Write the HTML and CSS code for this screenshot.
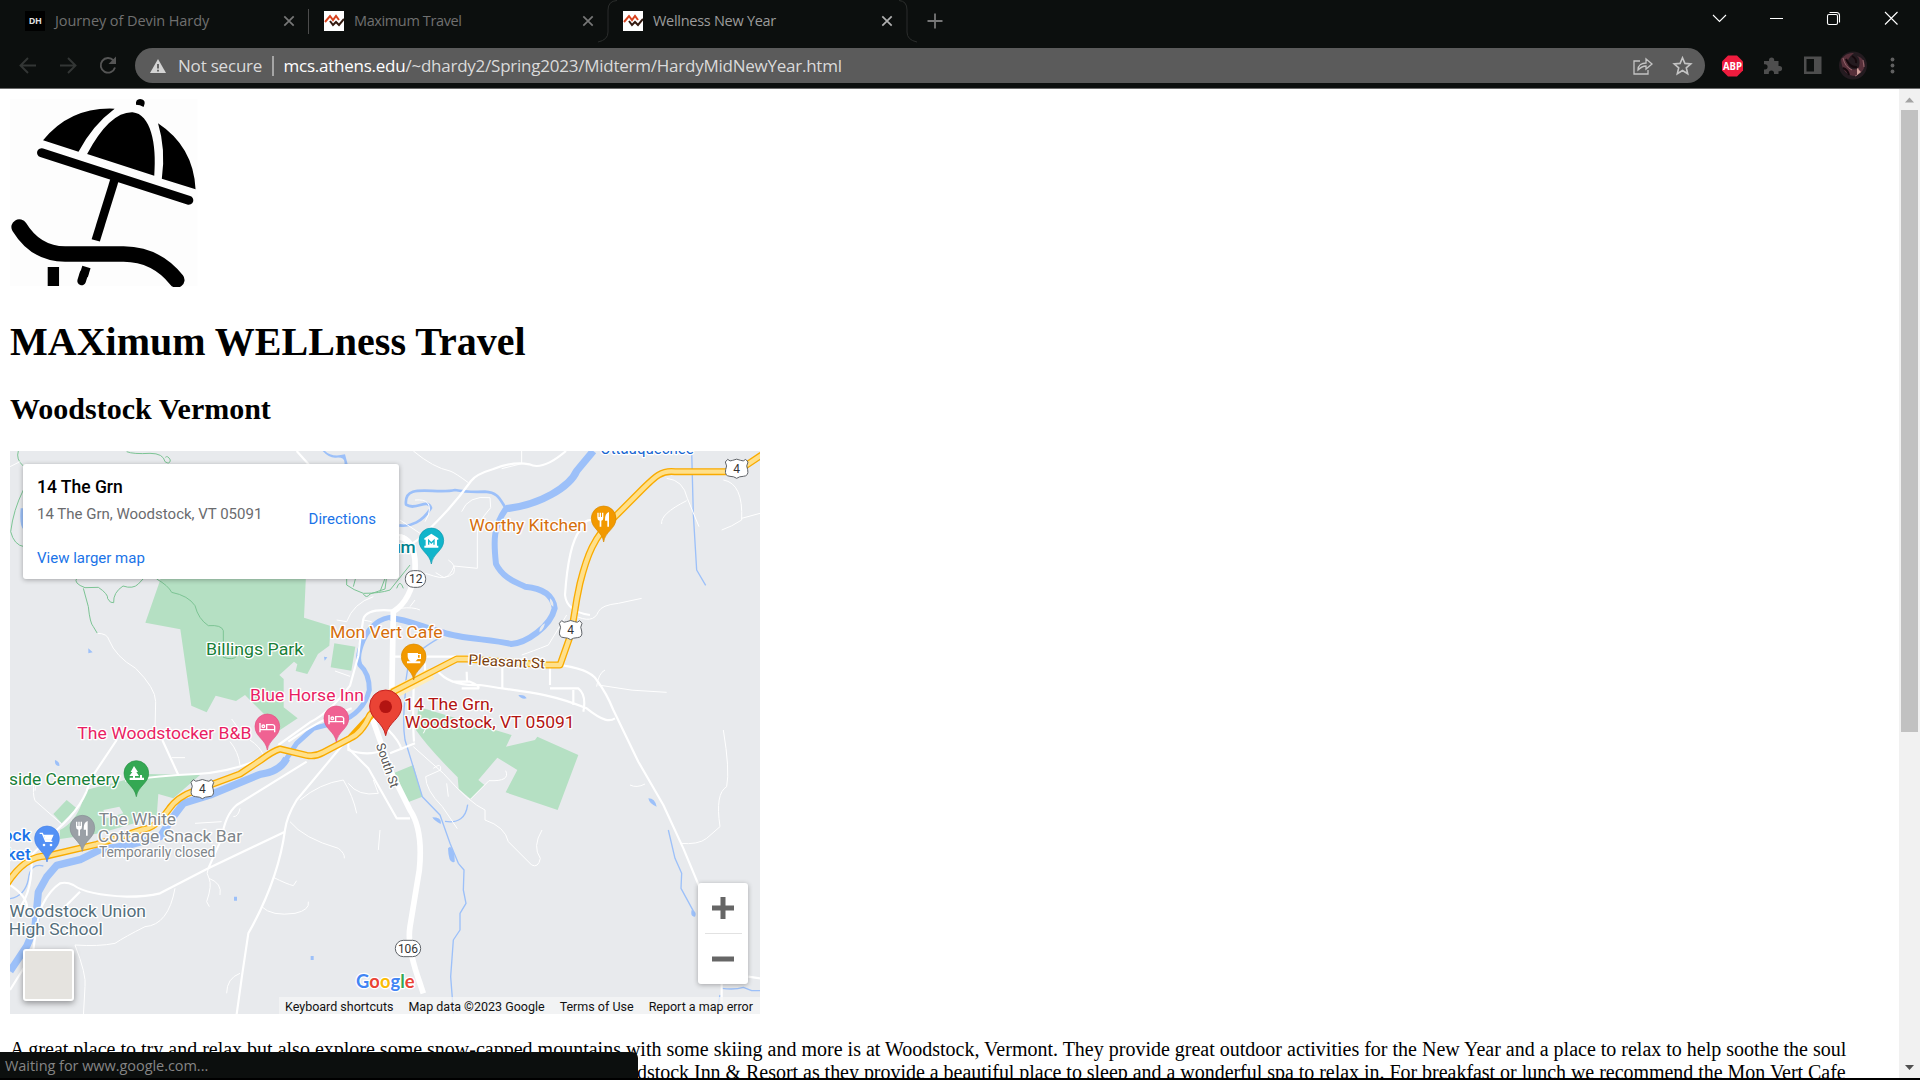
FILE: index.html
```html
<!DOCTYPE html>
<html lang="en">
<head>
<meta charset="utf-8">
<title>Wellness New Year</title>
<link rel="stylesheet" href="styles.css">
</head>
<body>
<header class="chrome">
  <div class="tabstrip">
    <div class="tab"><span class="favicon dh">DH</span><span class="tab-title t1">Journey of Devin Hardy</span><svg class="x" viewBox="0 0 12 12"><path d="M1.3 1.3l9.4 9.4m0-9.4l-9.4 9.4"/></svg><i class="sep"></i></div>
    <div class="tab"><svg class="favicon" viewBox="0 0 20 20"><path fill="#fff" d="M0 0h20v20H0z"/><path d="M1 11l5-6 3 4 3-4 3 4" fill="none" stroke="#d8431f" stroke-width="2"/><path d="M6 10l3 4 3-3 3 3 5-6" fill="none" stroke="#33190f" stroke-width="2"/></svg><span class="tab-title t2">Maximum Travel</span><svg class="x" viewBox="0 0 12 12"><path d="M1.3 1.3l9.4 9.4m0-9.4l-9.4 9.4"/></svg><i class="sep off"></i></div>
    <div class="tab active"><svg class="outline" viewBox="0 0 320 43"><path d="M0 42Q10 40 10 32V10Q10 1 19 .5M301 .5Q309 1 309 10V32Q309 40 319 42"/></svg><svg class="favicon" viewBox="0 0 20 20"><path fill="#fff" d="M0 0h20v20H0z"/><path d="M1 11l5-6 3 4 3-4 3 4" fill="none" stroke="#d8431f" stroke-width="2"/><path d="M6 10l3 4 3-3 3 3 5-6" fill="none" stroke="#33190f" stroke-width="2"/></svg><span class="tab-title t3">Wellness New Year</span><svg class="x" viewBox="0 0 12 12"><path d="M1.3 1.3l9.4 9.4m0-9.4l-9.4 9.4"/></svg><i class="sep off"></i></div>
    <svg class="newtab" viewBox="0 0 16 16"><path d="M8 .5v15M.5 8h15"/></svg>
    <svg class="winbtns" viewBox="0 0 200 36"><path d="M13 15l6.500 6.500 6.500-6.500M70 18.500h13M185 12l12.500 12.500m0-12.500L185 24.500"/><rect x="127.500" y="14.500" width="10" height="10" rx="1.500"/><path d="M129.500 12.500h7q3 0 3 3v7"/></svg>
  </div>
  <div class="toolbar">
    <svg class="nav" viewBox="0 0 110 35"><path stroke="#333635" d="M26 17.500H10.500m7.500-7.500l-7.500 7.500 7.500 7.500M50 17.500h15.500m-7.500-7.500l7.500 7.500-7.500 7.500"/><path stroke="#555" d="M103.500 12.500A7.300 7.300 0 1 0 105 19.500"/><path fill="#555" d="M106 8.500v7.500h-7.500z"/></svg>
    <div class="omnibox">
      <svg class="warn" viewBox="0 0 16 14"><path fill="#d4d4d4" d="M8 0l8 14H0z"/><path stroke="#5b5b5b" stroke-width="1.800" d="M8 5v4.500m0 1.300v1.700"/></svg>
      <span class="ns">Not secure</span><i class="usep"></i><span class="url"><b>mcs.athens.edu</b>/~dhardy2/Spring2023/Midterm/HardyMidNewYear.html</span>
      <svg class="obicons" viewBox="0 0 60 20"><path d="M7 5H1v13h14v-4"/><path d="M5 14c0-5 4-7 8-7V3l6 5-6 5v-3c-3 0-5 1-8 4z"/><path stroke-width="1.600" d="M49.500 1.800l2.400 5.600 5.900.5-4.500 3.900 1.400 5.900-5.200-3.200-5.200 3.200 1.400-5.900-4.500-3.900 5.900-.5z"/></svg>
    </div>
    <svg class="ext" viewBox="0 0 190 35"><path fill="#ef1c3e" d="M13 7.500h9l6 6v9l-6 6h-9l-6-6v-9z"/><text x="17.500" y="21.800" textLength="19" lengthAdjust="spacingAndGlyphs">ABP</text><path fill="#4e4e4e" d="M49 13h5v-1a2.600 2.600 0 0 1 5.200 0v1h4.300v5h1a2.600 2.600 0 0 1 0 5.200h-1V26h-4.500v-1a2.600 2.600 0 0 0-5.200 0v1H49v-4.600h1a2.600 2.600 0 0 0 0-5.200h-1z"/><path fill="#4e4e4e" fill-rule="evenodd" d="M89 8.500h17.500V26H89zM91.500 11v12.500h7.500V11z"/><circle cx="138" cy="17.500" r="14" fill="#241b20"/><path fill="#57303a" d="M126 11q6-7 13-6-8 6-6 12 5 8 11 2 2-8-2-11 7 2 8 9-2 8-9 11-14 0-15-17z"/><path stroke="#94666c" fill="none" d="M128 10q2 9 9 12M143 20q2 7-3 8M148 12l1 7"/><path fill="#d2a39c" d="M142 20l4 4-4 3z"/><path fill="none" stroke="#15090d" stroke-width="2" d="M131 11q4 9 11 8M134 27q-1-5-6-7M137 8q5 3 4 7"/><g fill="#606060"><circle cx="177.500" cy="11.500" r="1.900"/><circle cx="177.500" cy="17.500" r="1.900"/><circle cx="177.500" cy="23.500" r="1.900"/></g></svg>
  </div>
</header>
<div class="viewport">
  <main>
    <svg class="logo" viewBox="30 27 549 564" preserveAspectRatio="none"><path fill="#fdfdfd" d="M30 27h545v560H30z"/><path d="M396 44Q394 28 408 27q15 2 13 14l-3 10q-10-7-22-7zM126 151Q205 50 334 56 270 105 229 185zM254 192Q320 65 386 67C438 72 457 160 449 257zM460 100Q563 170 569 298L471 266Q483 178 460 100z"/><g fill="none" stroke="#000"><path stroke-width="27" stroke-linecap="round" d="M122 188L549 331"/><path stroke-width="25" d="M335 265L279 451"/><path stroke-width="46" stroke-linecap="round" d="M57 411Q105 492 190 492H360Q455 493 514 570"/><path stroke-width="33" d="M156 531v57"/><path stroke-width="25" d="M252 531l-8 27"/><path stroke-width="25" stroke-linecap="round" d="M245 550l-7 23"/></g></svg>
    <h1>MAXimum WELLness Travel</h1>
    <h2>Woodstock Vermont</h2>
    <section class="map">
      <svg class="mapart" viewBox="30 33 2250 1689">
        <defs>
          <path id="pin" d="M0 71C-5 38-37 32-37 0A37 37 0 1 1 37 0C37 32 5 38 0 71z"/>
          <g id="us4"><path class="shield" d="M-27-28Q-20-20-12-25 0-32 12-25 20-20 27-28L34-20Q27-8 33 3 37 22 20 23 8 23 0 29-8 23-20 23-37 22-33 3-27-8-34-20z"/><text y="13" class="num">4</text></g>
          <g id="fork"><path fill="#fff" d="M-19-18h4v13h3v-13h4v13h3v-13h4V-3Q-1 5-7 6v18h-5V6Q-19 5-19-3zM16-20v44h-5V6H4Q3-17 16-20z"/></g>
          <g id="bed" fill="none" stroke="#fff" stroke-width="4"><path d="M-22-13v28M-22 7h44M22 15V-3Q20-8 15-8H-2V6"/><circle cx="-12" cy="-3" r="4"/></g>
        </defs>
        <path fill="#e8eaed" d="M0 0h2300v1760H0z"/>
        <g fill="#b5e0c3">
          <path d="M484 410L436 548l105 20 33 229 46 20 27-50 61 16 27-18 105 105 53-35-42-33v-85l-13-12 44-40 10 8-5 20 35 9 32-60 34-25 4-59-80-25 6-128zM1003 610l63 10-12 72-62-10z"/>
          <path d="M375 1020L258 1050l-11 35q-20 60-67 85v27l120-17 170-50 5-68 45 13 80-70-160-3zM200 1080l30 25-45 45-25-28z"/>
          <path d="M1255 800l280 85-17 35 87-20 7-10 123 55-62 165-156-53 35-67-60-37-57 67 18 15-41 42-36-30-3-35q-90-90-125-142zM1180 1000l60-25 27 95-47 18z"/>
        </g>
        <path fill="#e8eaed" d="M310 1110l48-10 12 20-50 15z"/>
        <g class="trail">
          <path d="M55 33q-8 25 15 45M70 150q-30 60-38 125 10 40 40 45M380 35q20 8 70 5 40 0 45 25 15 10 16-5-8-15-15-8M230 415q-10 15 25 28l40-1q30 20 28 34 8 15 18 12-2-30 28-50 30 10 46-6l15-16M250 445l15 55q5 50 15 60l12 20M470 417q35 20 45 40 50 10 70 40 10 40 40 60 40-3 45 15v80q30 10 40-4"/>
          <path d="M1040 410v25q20 15 50 25 50 0 80-10l60-75M1060 440l8-30M1090 462q10 15 20 0l45-15 5-37M1140 455l15-40M1190 445q10-30 20 0"/>
        </g>
        <g class="water">
          <path class="w20" d="M1780 33l-50 60C1710 140 1620 195 1518 206"/>
          <path class="w12" d="M1520 208c-20-25-20-50-65-53q-55 2-90-5c-60 15-155-25-147 44 30 20 65-22 75 10-25 40-60 58-95 52"/>
          <path class="w16" d="M1518 206C1480 260 1480 300 1488 372 1510 415 1545 425 1575 440c60 5 85 30 89 65-13 55-85 104-130 107-60-15-150-15-205-35-50-10-100-38-159-43"/>
          <path class="w14" d="M1180 531Q1120 535 1090 600 1068 650 1080 675 1108 700 1108 750 1090 820 1020 845L940 865 890 910 860 955Q848 988 780 1003"/>
          <path class="w24" d="M860 955q-20 40-80 48l-150 62-80 25-30 40-40 60-100 27-80 12-60 30-70 17-30 35-25 45-10 105-25 58-50 75"/>
          <path fill="#e8eaed" stroke="none" d="M1650 475q12 10 10 25-12-5-10-25zM1635 550q-5 22-17 26 0-18 17-26z"/>
          <path class="w4" d="M1320 593q-80 45-95 80-10 50-10 100-8 80 0 127l52 170 53 55 30 85 25 60 17 20-2 60 8 40-18 30v50l-20 30-8 110 10 130M2075 33l5 190 10 167 27 46M2005 1170l20 85 20 45-2 45 38 70M1335 1144q60 10 68-50M2165 1645q40 5 65-3l25 10h25M2160 1665l-10 50M130 1278q-40-10-45 40-10 50-55 58"/>
          <path fill="#9cc0f9" stroke="none" d="M1350 1220q15 10 14 45-18 10-20-40zM1297 1132q30 0 25 20-20-10-25-20zM1945 1075q20 0 25 25-22-8-25-25zM2075 1410q17 5 10 20-15 0-10-20zM265 625l13 12-13 3zM972 650l10 2-8 10zM165 960q15 5 13 18-15 0-13-18zM1555 765q20-2 25 10-15 5-25-10zM62 205h10v65q-15-10-10-65zM975 33q20 20 60 10l8 30-10 2q5-25-25-22-20 2-40-20zM702 1370h9v12h-9zM932 1548h9v12h-9z"/>
        </g>
        <g class="minor">
          <path d="M30 80l30-15M292 580q30 0 35 20 20 50 80 85 60 60 60 100l-2 85M695 837l25 35M105 1052q5-30-3-28-5 38 3 58l80 70M1115 545l-25-5M1005 693l45 16M1010 540l30 5q20-55 80-75M690 905q25 30 30 70M750 900q30 20 40 45M515 953h40"/>
          <path d="M1240 33q60 50 110 60 15 5 55 35M1565 33v38l-60 15M1200 240l60 40M1245 180q55-5 40 45l-10 20M1385 215q20-50 85-42l2 30q-45 50-40 85v97l-70-7q-10 30-30 35l-25-15M1345 360q25 15 16 40-25 20-60 8l-25-8M1245 480l-15 20M1200 505q40-5 60 5M2000 115q50 5 62 60l35 85M2060 182q-80 40-75 70M2170 120q60 10 55 120-30 20-60 30M2225 235l55-15M1700 525l-55 90q-50 20-80 30M1720 525q60 30 75-10 10-20 60-25l70-15M1795 735q100 20 205 22M1790 740q5-40 25-50M1280 860l-10 20"/>
          <path d="M1240 920l90 80q80 90 125 110v30q60 20 70 65l70 70q20 10 26-20-25-35 5-85M1300 985q25-20 22 5l-45 20q0 40 50 90l45 66M1340 1030l5 40M1412 1077l55-55q65 3 50-30M1890 1035q20 10 45-3M2170 870q20 120 10 170-35 20-20 120l-40 35q-25 20-80 15M625 1285q-8 15 2 30 40 15 33 50M627 1315q10 20-7 70l8 15M820 1312q40 20 60 25l10-15M785 1400q30 30 100 20 45-10 40-35M525 1345q-20 110-90 115-60 30-90 50-50 10-120 5 35 90 30 125l-5 90M680 1660q0-45 40-60M870 1145q40 50 145 80 20 15 18 30M900 1080q60-50 130-60 30 50 40 100M1045 1030q30 40 90 30l-15-40M1140 1170l-5 60M585 1150l80-5M720 1105q-5 25-20 25"/>
        </g>
        <g class="road">
          <path class="r8" d="M890 33l45 50M1698 33q-70 60-110 40-50-10-110 15-50 15-65 35c-50 70-90 110-150 170l-60 40M1140 285q90-10 98 35c12 80 15 140-60 195"/>
          <path class="r16" d="M1200 290q50 15 45 100-10 90-65 125l-5 255M1115 830l60 170 55 110q40 60 28 180l-28 170q-10 60 30 170l10 30"/>
          <path class="r8" d="M1180 512q-80-8-90 25-10 60-15 110l-25 90q-60 80-120 110L835 915M865 905q100-70 190-100M1178 650h240M1400 695l1 30M1507 675v68M1650 745h85q25 20 15 70M1720 750v45M1310 690q40 50 130 45c120 20 200 20 320 70 50 40 70 40 85 30M1355 725h55q30 12 25 20h-50M1650 675v60M1665 673q105 12 125 47 30 40 50 90l75 155 75 130 60 130 50 120M1770 525q-70-10-75-60 10-150 45-195 20-50 55-15M1165 870q35 35 40 60M1275 670v45M1242 715q-5 130 0 190M1045 900v30q60 20 105 0M1170 940l75-30M487 900l48 105M350 900l-80 120q-15 75-100 150"/>
          <path class="r8" d="M1045 925l60 60 85 150h40M1040 900l-150 180q-30 50-35 90-20 150-110 310-20 130-36 250M920 965l-210 130q-35 30-45 100l-40 90M375 1022q100-15 215-20 100-5 190-45M100 1530q15-120 30-140 20-40 50-60 20-5 40 5 40 30 160 35 60 0 100-10l145-75 230-110M830 920l10 10M95 1270q0 100-50 150M170 1170l-75 75M240 1355l-45 45M30 1335q60 40 50 80M30 1650l75-120M2245 1610l35 5M2165 1620v100"/>
        </g>
        <path class="soft" d="M1170 765l125-65"/>
        <path class="yellow-case" d="M2285 45l-75 50h-185c-40-5-60 15-95 50l-80 80C1780 290 1760 350 1740 430c-20 90-15 100-30 160l-30 85h-40l-240-18h-30L1180 755 1110 825Q1085 880 1050 895l-80 42q-25 14-50 9l-80-19q-20 5-60 35l-60 40-130 48q-60 20-85 60-40 55-75 58l-140 45-150 35q-70 0-125 94M1050 895l110-120"/>
        <path class="yellow" d="M2285 45l-75 50h-185c-40-5-60 15-95 50l-80 80C1780 290 1760 350 1740 430c-20 90-15 100-30 160l-30 85h-40l-240-18h-30L1180 755 1110 825Q1085 880 1050 895l-80 42q-25 14-50 9l-80-19q-20 5-60 35l-60 40-130 48q-60 20-85 60-40 55-75 58l-140 45-150 35q-70 0-125 94"/>
        <g stroke-width="2">
          <use href="#pin" x="1811" y="235" fill="#f29900" stroke="#d88a00"/><use href="#pin" x="1241" y="649" fill="#f29900" stroke="#d88a00"/><use href="#pin" x="1294" y="301" fill="#12b5cb" stroke="#0c99ad"/><use href="#pin" x="802" y="859" fill="#f06292" stroke="#e25282"/><use href="#pin" x="1009" y="835" fill="#f06292" stroke="#e25282"/><use href="#pin" x="409" y="999" fill="#34a853" stroke="#2d9148"/><use href="#pin" x="247" y="1163" fill="#9aa0a6" stroke="#888f95"/><use href="#pin" x="141" y="1195" fill="#5491f5" stroke="#4682e8"/>
        </g>
        <use href="#fork" x="1811" y="236"/><use href="#fork" x="247" y="1163"/><use href="#bed" x="802" y="862"/><use href="#bed" x="1009" y="838"/>
        <path fill="#fff" d="M1223 639h31v3h9v15h-10q-5 9-14 9-16-2-16-17zM1254 645v8h5v-8zM1221 664h40v6h-40zM1273 295l21-14 21 14v4h-4v18h4v6h-42v-6h4v-18h-4z"/>
        <path fill="none" stroke="#12b5cb" stroke-width="4" d="M1286 314v-13l8 8 8-8v13"/>
        <path fill="#fff" d="M402 978l12 18h-5l8 12h-12v5h15v-8h6v8h6v7h-43v-7h10v-5h-11l9-12h-5z"/>
        <path fill="none" stroke="#fff" stroke-width="4" d="M119 1180h8l10 24h20M129 1186h29l-6 14h-17"/><path fill="#fff" d="M132 1187h26l-6 12h-16z"/><circle cx="132" cy="1215" r="4" fill="#fff"/><circle cx="153" cy="1215" r="4" fill="#fff"/>
        <use href="#us4" x="2210" y="86"/><use href="#us4" x="1712" y="570"/><use href="#us4" x="607" y="1047"/>
        <rect class="shield" x="1216" y="392" width="61" height="50" rx="24"/><text class="num" x="1247" y="430">12</text>
        <rect class="shield" x="1186" y="1501" width="76" height="49" rx="24"/><text class="num" x="1224" y="1538">106</text>
        <g class="label">
          <text x="1801" y="42" textLength="280" lengthAdjust="spacingAndGlyphs" fill="#1967d2">Ottauquechee</text>
          <text x="1408" y="272" textLength="353" lengthAdjust="spacingAndGlyphs" fill="#d56e0c">Worthy Kitchen</text>
          <text x="1247" y="340" text-anchor="end" fill="#00838f" font-weight="500">Museum</text>
          <text x="990" y="595" textLength="338" lengthAdjust="spacingAndGlyphs" fill="#d56e0c">Mon Vert Cafe</text>
          <text x="618" y="645" textLength="292" lengthAdjust="spacingAndGlyphs" fill="#188038">Billings Park</text>
          <text x="750" y="783" textLength="342" lengthAdjust="spacingAndGlyphs" fill="#e91e63">Blue Horse Inn</text>
          <text x="232" y="897" textLength="522" lengthAdjust="spacingAndGlyphs" fill="#e91e63">The Woodstocker B&amp;B</text>
          <text x="1405" y="674" textLength="229" lengthAdjust="spacingAndGlyphs" class="sm" fill="#7a3e0b" transform="rotate(3 1408 674)">Pleasant St</text>
          <text x="1212" y="811" textLength="268" lengthAdjust="spacingAndGlyphs" fill="#b31412">14 The Grn,</text>
          <text x="1214" y="864" textLength="510" lengthAdjust="spacingAndGlyphs" fill="#b31412">Woodstock, VT 05091</text>
          <text x="27" y="1035" textLength="332" lengthAdjust="spacingAndGlyphs" fill="#188038">side Cemetery</text>
          <text x="296" y="1154" textLength="232" lengthAdjust="spacingAndGlyphs" fill="#80868b">The White</text>
          <text x="293" y="1207" textLength="434" lengthAdjust="spacingAndGlyphs" fill="#80868b">Cottage Snack Bar</text>
          <text x="297" y="1251" textLength="349" lengthAdjust="spacingAndGlyphs" class="sm" fill="#80868b">Temporarily closed</text>
          <text x="92" y="1202" text-anchor="end" fill="#1a73e8" font-weight="500">Woodstock</text>
          <text x="92" y="1260" text-anchor="end" fill="#1a73e8" font-weight="500">Farmers' Market</text>
          <text x="28" y="1432" textLength="410" lengthAdjust="spacingAndGlyphs" fill="#546e7a">Woodstock Union</text>
          <text x="26" y="1485" textLength="282" lengthAdjust="spacingAndGlyphs" fill="#546e7a">High School</text>
          <text x="1126" y="917" textLength="138" lengthAdjust="spacingAndGlyphs" class="xs" fill="#555" transform="rotate(71 1128 917)">South St</text>
          <text x="1068" y="1644" textLength="176" lengthAdjust="spacingAndGlyphs" class="google"><tspan fill="#4285f4">G</tspan><tspan fill="#ea4335">o</tspan><tspan fill="#fbbc04">o</tspan><tspan fill="#4285f4">g</tspan><tspan fill="#34a853">l</tspan><tspan fill="#ea4335">e</tspan></text>
        </g>
        <path fill="#ea4335" stroke="#c5221f" stroke-width="3" d="M1157 887C1150 845 1109 838 1109 798A48 48 0 1 1 1205 798C1205 838 1164 845 1157 887z"/><circle cx="1157" cy="800" r="19" fill="#b31412"/>
      </svg>
      <div class="card">
        <div class="place"><strong>14 The Grn</strong><span>14 The Grn, Woodstock, VT 05091</span><a>View larger map</a></div>
        <a class="dir">Directions</a>
      </div>
      <div class="tile"></div>
      <div class="zoom"><svg viewBox="0 0 22 22"><path d="M11 0v22M0 11h22"/></svg><i></i><svg viewBox="0 0 22 22"><path d="M0 11h22"/></svg></div>
      <div class="legal"><span>Keyboard shortcuts</span><span>Map data ©2023 Google</span><span>Terms of Use</span><span>Report a map error</span></div>
    </section>
    <p><span class="line">A great place to try and relax but also explore some snow-capped mountains with some skiing and more is at Woodstock, Vermont. They provide great outdoor activities for the New Year and a place to relax to help soothe the soul</span><span class="line second"><span class="lead">and body. For a place to stay we recommend the Woo</span>dstock Inn &amp; Resort as they provide a beautiful place to sleep and a wonderful spa to relax in. For breakfast or lunch we recommend the Mon Vert Cafe</span></p>
  </main>
  <aside class="scrollbar"><svg viewBox="0 0 21 21"><path fill="#a3a3a3" d="M6 13.500l4.500-5 4.500 5z"/></svg><div class="thumb"></div><svg class="down" viewBox="0 0 21 21"><path fill="#505050" d="M6 8l4.500 5 4.500-5z"/></svg></aside>
</div>
<div class="status">Waiting for www.google.com...</div>
</body>
</html>
```
FILE: styles.css
```css
* { box-sizing: border-box; }
body { margin: 0; width: 1920px; height: 1080px; overflow: hidden; display: flex; flex-direction: column; background: #fff; border-bottom: 2px solid #000; position: relative; color: #000; font-family: "Liberation Serif", serif; font-size: 20px; }
svg { display: block; flex: none; }
.chrome { height: 89px; flex: none; background: #0c0f0e; border-bottom: 1px solid #6b6b6b; font-family: "Open Sans", sans-serif; }
.tabstrip { display: flex; height: 48px; padding-left: 10px; align-items: flex-start; }
.tab { width: 299px; height: 42px; padding-left: 15px; display: flex; align-items: center; position: relative; color: #707070; font-size: 14.5px; }
.favicon { width: 20px; height: 20px; margin-right: 10px; flex: none; }
.dh { background: #000; color: #ddd; font-size: 9px; font-weight: 700; line-height: 20px; text-align: center; letter-spacing: -.5px; }
.tab-title { white-space: nowrap; margin-right: auto; line-height: 20px; }
.t1 { letter-spacing: -.08px; }
.t2 { letter-spacing: -.38px; }
.t3 { letter-spacing: -.28px; }
.x { width: 12px; height: 12px; margin-right: -1px; fill: none; stroke: #777; stroke-width: 1.7; }
.sep { width: 1px; height: 25px; background: #4c4c4c; margin-left: 14px; }
.off { background: none; }
.active { color: #9b9b9b; }
.active .x { stroke: #b0b0b0; }
.outline { position: absolute; left: -10px; top: 0; width: 320px; height: 43px; fill: none; stroke: #2b2d2c; }
.newtab { width: 16px; height: 16px; margin: 13px 0 0 20px; fill: none; stroke: #777; stroke-width: 1.8; }
.winbtns { width: 200px; height: 36px; margin-left: auto; margin-right: 20px; fill: none; stroke: #fff; stroke-width: 1.1; }
.toolbar { display: flex; height: 35px; padding-left: 10px; }
.nav { width: 110px; height: 35px; margin-right: 15px; fill: none; stroke-width: 1.9; }
.omnibox { width: 1570px; height: 35px; border-radius: 18px; background: #5b5b5b; display: flex; align-items: center; padding: 0 17px 0 15px; color: #dadada; font-size: 17px; line-height: 35px; }
.warn { width: 16px; height: 14px; margin-right: 12px; }
.ns { width: 94px; letter-spacing: -.2px; white-space: nowrap; }
.usep { width: 1.5px; height: 20px; background: #a5a5a5; margin-right: 10px; }
.url { letter-spacing: -.24px; white-space: nowrap; }
.url b { font-weight: 400; color: #fff; }
.obicons { width: 60px; height: 20px; margin-left: auto; margin-right: -5px; fill: none; stroke: #c4c4c4; stroke-width: 1.3; }
.ext { width: 190px; height: 35px; margin-left: 10px; }
.ext text { font: 700 11px "Open Sans", sans-serif; fill: #fff; text-anchor: middle; }
.viewport { flex: 1; min-height: 0; display: flex; overflow: hidden; }
main { flex: 1; min-width: 0; padding: 10px 10px 0; }
.logo { width: 189px; height: 188px; margin-bottom: 32px; }
h1 { font-size: 40px; line-height: 46px; margin: 0; }
h2 { font-size: 30px; line-height: 34px; margin: 27px 0 25px; }
.map { width: 750px; height: 563px; position: relative; overflow: hidden; font-family: Roboto, sans-serif; }
.mapart { width: 750px; height: 563px; }
.trail { fill: none; stroke: #7cc494; stroke-width: 3; }
.water { fill: none; stroke: #9cc0f9; stroke-linejoin: round; }
.w20 { stroke-width: 22; }
.w16 { stroke-width: 18; }
.w14 { stroke-width: 15; }
.w12 { stroke-width: 8; }
.w24 { stroke-width: 22; }
.w4 { stroke-width: 4; }
.minor { fill: none; stroke: #fff; stroke-width: 3; }
.road { fill: none; stroke: #fff; stroke-linejoin: round; }
.r8 { stroke-width: 6.5; }
.r16 { stroke-width: 17; }
.soft { stroke: #ffedb8; stroke-width: 34; }
.yellow-case, .yellow { fill: none; stroke-linejoin: round; }
.yellow-case { stroke: #f9ab00; stroke-width: 21; }
.yellow { stroke: #ffe08a; stroke-width: 13; }
.shield { fill: #fff; stroke: #5f6368; stroke-width: 3; }
.num { font: 36px Roboto, sans-serif; fill: #333; text-anchor: middle; }
.label text { font-size: 52px; paint-order: stroke; stroke: #fff; stroke-width: 8px; stroke-linejoin: round; }
.label .sm { font-size: 43px; }
.label .xs { font-size: 39px; }
.label .google { font-family: Lato, sans-serif; font-size: 58px; font-weight: 700; }
.card { position: absolute; left: 13px; top: 13px; width: 376px; height: 115px; background: #fff; border-radius: 3px; box-shadow: 0 1px 5px rgba(0,0,0,.3); display: flex; justify-content: space-between; padding: 13px 23px 0 14px; font-size: 15px; }
.place { display: flex; flex-direction: column; }
.place strong { font-size: 17.5px; font-weight: 500; line-height: 20px; }
.place span { color: #6a6b6e; line-height: 18px; margin-top: 8px; }
.card a { color: #1a73e8; line-height: 18px; }
.place a { margin-top: 26px; }
.dir { margin-top: 33px; }
.tile { position: absolute; left: 13px; top: 498px; width: 51px; height: 52px; background: #e5e3df; border: 2px solid #fff; border-radius: 3px; box-shadow: 0 2px 6px rgba(0,0,0,.4); }
.zoom { position: absolute; left: 688px; top: 432px; width: 50px; height: 101px; background: #fff; border-radius: 3px; box-shadow: 0 1px 5px rgba(0,0,0,.3); display: flex; flex-direction: column; align-items: center; justify-content: space-between; padding: 14px 0; }
.zoom svg { width: 22px; height: 22px; stroke: #666; stroke-width: 5; }
.zoom i { width: 37px; height: 1px; background: #e2e2e2; }
.legal { position: absolute; right: 0; bottom: 0; width: 481px; height: 17px; background: rgba(245,245,245,.75); display: flex; justify-content: space-between; padding: 1px 7px 0 6px; color: #111; font-size: 12.5px; line-height: 17px; white-space: nowrap; }
p { margin: 24px 0 0; line-height: 23px; }
.line { display: block; white-space: nowrap; }
.second { letter-spacing: -.03px; }
.lead { display: inline-block; width: 627px; text-align: right; }
.scrollbar { width: 21px; background: #f1f1f1; display: flex; flex-direction: column; align-items: center; }
.scrollbar svg { width: 21px; height: 21px; }
.thumb { width: 17px; height: 622px; background: #c1c1c1; }
.down { margin-top: auto; }
.status { position: absolute; left: 0; top: 1052px; width: 638px; height: 28px; background: #0c0f0e; border-top-right-radius: 6px; color: #858585; font: 14.5px/27px "Open Sans", sans-serif; letter-spacing: -.05px; padding-left: 5px; }
```
